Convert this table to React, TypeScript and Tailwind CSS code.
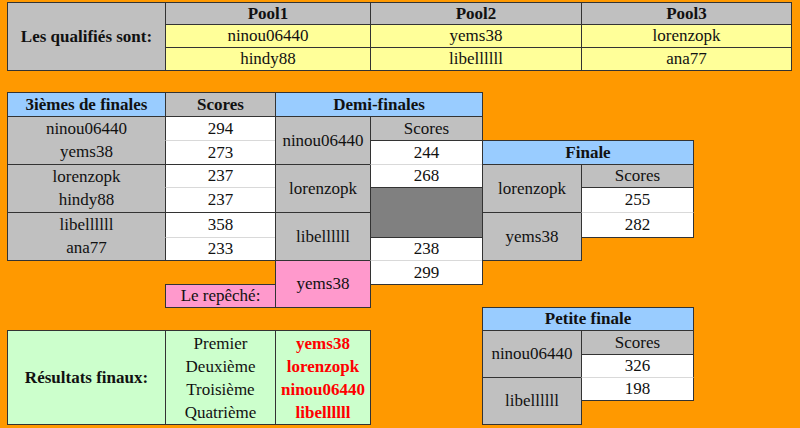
import type { ReactNode } from 'react'

const GRAY  = 'bg-[#c0c0c0]'
const WHITE = 'bg-white'
const LIGHT = 'border-t-[#d9d9d9]'

function C({ className, children }: { className: string; children?: ReactNode }) {
  return (
    <div className={'-ml-px -mt-px flex items-center justify-center border border-[#333] text-center whitespace-nowrap ' + className}>
      {children}
    </div>
  )
}

function Pair({ a, b }: { a: string; b: string }) {
  return (
    <div className="flex h-full w-full flex-col">
      <div className="flex flex-1 items-center justify-center">{a}</div>
      <div className="flex flex-1 items-center justify-center">{b}</div>
    </div>
  )
}

export default function App() {
  return (
    <div className="h-[428px] w-[800px] overflow-hidden bg-[#ff9900] [font-family:'Liberation_Serif',serif] text-[17px] leading-[20px] text-[#111]">
      <div className="grid h-full grid-cols-[8px_158px_110px_95px_112px_99px_112px_98px_8px] grid-rows-[3px_22px_23px_23px_22px_24px_24px_24px_23px_25px_25px_23px_24px_23px_23px_24px_23px_23px_24px_3px]">
        {/* qualifiés */}
        <C className={'col-start-2 row-start-2 row-span-3 font-bold ' + GRAY}>Les qualifiés sont:</C>
        <C className={'col-start-3 col-span-2 row-start-2 font-bold ' + GRAY}>Pool1</C>
        <C className={'col-start-5 col-span-2 row-start-2 font-bold ' + GRAY}>Pool2</C>
        <C className={'col-start-7 col-span-2 row-start-2 font-bold ' + GRAY}>Pool3</C>
        <C className="col-start-3 col-span-2 row-start-3 bg-[#ffff99]">ninou06440</C>
        <C className="col-start-5 col-span-2 row-start-3 bg-[#ffff99]">yems38</C>
        <C className="col-start-7 col-span-2 row-start-3 bg-[#ffff99]">lorenzopk</C>
        <C className="col-start-3 col-span-2 row-start-4 bg-[#ffff99]">hindy88</C>
        <C className="col-start-5 col-span-2 row-start-4 bg-[#ffff99]">libellllll</C>
        <C className="col-start-7 col-span-2 row-start-4 bg-[#ffff99]">ana77</C>

        {/* 3ièmes de finales */}
        <C className="col-start-2 row-start-6 bg-[#99ccff] font-bold">3ièmes de finales</C>
        <C className={'col-start-3 row-start-6 font-bold ' + GRAY}>Scores</C>
        <C className={'col-start-2 row-start-7 row-span-2 ' + GRAY}><Pair a="ninou06440" b="yems38" /></C>
        <C className={'col-start-3 row-start-7 ' + WHITE}>294</C>
        <C className={'col-start-3 row-start-8 ' + WHITE + ' ' + LIGHT}>273</C>
        <C className={'col-start-2 row-start-9 row-span-2 ' + GRAY}><Pair a="lorenzopk" b="hindy88" /></C>
        <C className={'col-start-3 row-start-9 ' + WHITE}>237</C>
        <C className={'col-start-3 row-start-10 ' + WHITE + ' ' + LIGHT}>237</C>
        <C className={'col-start-2 row-start-11 row-span-2 ' + GRAY}><Pair a="libellllll" b="ana77" /></C>
        <C className={'col-start-3 row-start-11 ' + WHITE}>358</C>
        <C className={'col-start-3 row-start-12 ' + WHITE + ' ' + LIGHT}>233</C>

        {/* demi-finales */}
        <C className="col-start-4 col-span-2 row-start-6 bg-[#99ccff] font-bold">Demi-finales</C>
        <C className={'col-start-4 row-start-7 row-span-2 ' + GRAY}>ninou06440</C>
        <C className={'col-start-5 row-start-7 ' + GRAY}>Scores</C>
        <C className={'col-start-5 row-start-8 ' + WHITE}>244</C>
        <C className={'col-start-4 row-start-9 row-span-2 ' + GRAY}>lorenzopk</C>
        <C className={'col-start-5 row-start-9 ' + WHITE + ' ' + LIGHT}>268</C>
        <C className="col-start-5 row-start-10 row-span-2 bg-[#808080]" />
        <C className={'col-start-4 row-start-11 row-span-2 ' + GRAY}>libellllll</C>
        <C className={'col-start-5 row-start-12 ' + WHITE}>238</C>
        <C className="col-start-4 row-start-13 row-span-2 bg-[#ff99cc]">yems38</C>
        <C className={'col-start-5 row-start-13 ' + WHITE + ' ' + LIGHT}>299</C>
        <C className="col-start-3 row-start-14 bg-[#ff99cc]">Le repêché:</C>

        {/* finale */}
        <C className="col-start-6 col-span-2 row-start-8 bg-[#99ccff] font-bold">Finale</C>
        <C className={'col-start-6 row-start-9 row-span-2 ' + GRAY}>lorenzopk</C>
        <C className={'col-start-7 row-start-9 ' + GRAY}>Scores</C>
        <C className={'col-start-7 row-start-10 ' + WHITE}>255</C>
        <C className={'col-start-6 row-start-11 row-span-2 ' + GRAY}>yems38</C>
        <C className={'col-start-7 row-start-11 ' + WHITE + ' ' + LIGHT}>282</C>

        {/* petite finale */}
        <C className="col-start-6 col-span-2 row-start-15 bg-[#99ccff] font-bold">Petite finale</C>
        <C className={'col-start-6 row-start-16 row-span-2 ' + GRAY}>ninou06440</C>
        <C className={'col-start-7 row-start-16 ' + GRAY}>Scores</C>
        <C className={'col-start-7 row-start-17 ' + WHITE}>326</C>
        <C className={'col-start-6 row-start-18 row-span-2 ' + GRAY}>libellllll</C>
        <C className={'col-start-7 row-start-18 ' + WHITE + ' ' + LIGHT}>198</C>

        {/* résultats */}
        <C className="col-start-2 row-start-16 row-span-4 bg-[#ccffcc] font-bold">Résultats finaux:</C>
        <C className="col-start-3 row-start-16 row-span-4 bg-[#ccffcc]">
          <div className="flex flex-col leading-[23px]">
            <span>Premier</span>
            <span>Deuxième</span>
            <span>Troisième</span>
            <span>Quatrième</span>
          </div>
        </C>
        <C className="col-start-4 row-start-16 row-span-4 bg-[#ccffcc] font-bold text-[#ff0000]">
          <div className="flex flex-col leading-[23px]">
            <span>yems38</span>
            <span>lorenzopk</span>
            <span>ninou06440</span>
            <span>libellllll</span>
          </div>
        </C>
      </div>
    </div>
  )
}
